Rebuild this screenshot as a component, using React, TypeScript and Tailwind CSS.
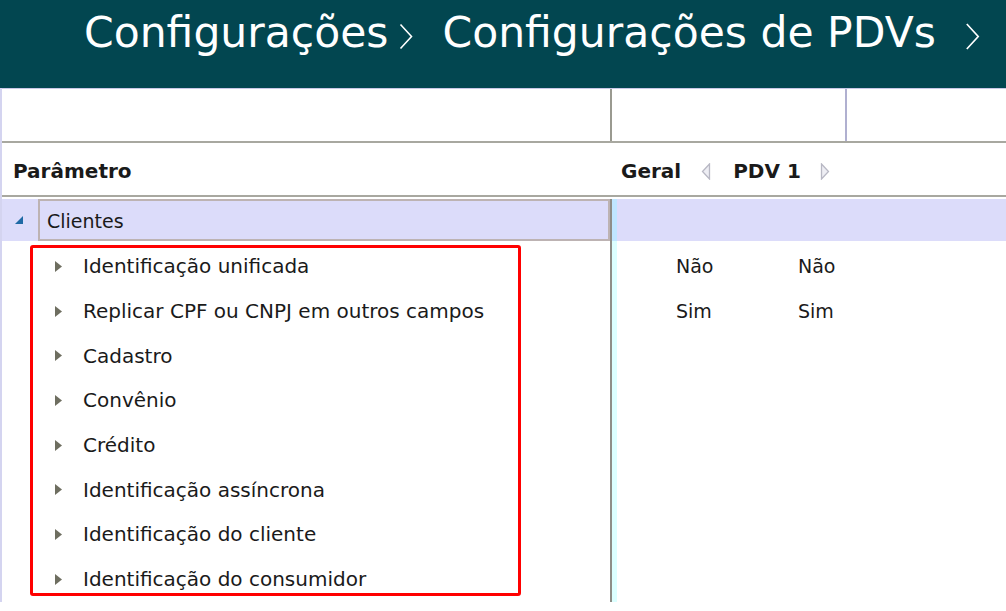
import React from 'react';

const rows = [
  { label: 'Identificação unificada', geral: 'Não', pdv: 'Não' },
  { label: 'Replicar CPF ou CNPJ em outros campos', geral: 'Sim', pdv: 'Sim' },
  { label: 'Cadastro' },
  { label: 'Convênio' },
  { label: 'Crédito' },
  { label: 'Identificação assíncrona' },
  { label: 'Identificação do cliente' },
  { label: 'Identificação do consumidor' },
];

function Chevron({ className }: { className?: string }) {
  return (
    <svg viewBox="0 0 14 26" className={className} fill="none" stroke="currentColor" strokeWidth="1.6">
      <path d="M1.5 1 L12.5 13 L1.5 25" />
    </svg>
  );
}

function ChildArrow() {
  return (
    <svg viewBox="0 0 7 11" className="w-[7px] h-[11px]">
      <path d="M0 0 L7 5.5 L0 11 Z" fill="#6e6e60" />
    </svg>
  );
}

function NavArrow({ dir }: { dir: 'left' | 'right' }) {
  return (
    <svg viewBox="0 0 10 17" className="w-[10px] h-[17px]">
      {dir === 'left' ? (
        <path d="M8.5 1 L1.5 8.5 L8.5 16 Z" fill="#eeeef4" stroke="#b8b8c4" strokeWidth="1.3" />
      ) : (
        <path d="M1.5 1 L8.5 8.5 L1.5 16 Z" fill="#eeeef4" stroke="#b8b8c4" strokeWidth="1.3" />
      )}
    </svg>
  );
}

export default function App() {
  return (
    <div
      className="relative w-[1006px] h-[611px] overflow-hidden bg-white text-[#1a1a1a]"
      style={{ fontFamily: '"DejaVu Sans", Verdana, sans-serif' }}
    >
      {/* Title bar */}
      <div className="h-[88px] bg-[#024650] flex items-start pt-[7px] pl-[84px] text-white text-[42.5px] leading-[52px] whitespace-nowrap">
        <span>Configurações</span>
        <Chevron className="w-[14px] h-[27px] mt-[16px] ml-[11px] mr-[29px]" />
        <span>Configurações de PDVs</span>
        <Chevron className="w-[15px] h-[27px] mt-[16px] ml-[29px]" />
      </div>

      <div className="border-l-2 border-[#d4d4f0]">
        {/* empty filter row */}
        <div className="h-[55px] flex border-t border-[#c8c8e6] border-b-2 border-b-[#a8a8a0]">
          <div className="w-[610px] border-r-2 border-[#9a9a90]" />
          <div className="w-[235px] border-r-2 border-[#b0b0d0]" />
          <div className="flex-1" />
        </div>

        {/* column headers */}
        <div className="h-[54px] flex items-center pt-[4px] border-b-2 border-[#a8a8a0] font-bold text-[20px]">
          <div className="w-[610px] pl-[11px]">Parâmetro</div>
          <div className="flex items-center pl-[9px]">
            <span>Geral</span>
            <span className="ml-[20px]"><NavArrow dir="left" /></span>
            <span className="ml-[22px]">PDV 1</span>
            <span className="ml-[19px]"><NavArrow dir="right" /></span>
          </div>
        </div>

        {/* group row */}
        <div className="h-[44px] flex bg-[#dcdcfa] border-t-2 border-white">
          <div className="w-[36px] flex items-center justify-center">
            <svg viewBox="0 0 8 8" className="w-[8px] h-[8px] ml-[-2px]">
              <path d="M8 0 L8 8 L0 8 Z" fill="#1f6aa5" />
            </svg>
          </div>
          <div className="w-[572px] border-2 border-[#bdb3b3] flex items-center pl-[7px] pt-[2px] text-[19px]">Clientes</div>
          <div className="w-[2px] bg-[#8e8e88]" />
          <div className="w-[5px] bg-[#bfe6ff]" />
          <div className="flex-1" />
        </div>

        {/* child rows */}
        <div className="flex">
          <div className="w-[610px] border-r-2 border-[#8e8e88] pt-[3px]">
            {rows.map((r) => (
              <div key={r.label} className="h-[44.7px] flex items-center text-[20px]">
                <div className="w-[81px] flex justify-end pr-[21px]">
                  <ChildArrow />
                </div>
                <span>{r.label}</span>
              </div>
            ))}
          </div>
          <div className="w-[5px] bg-[#dcffff]" />
          <div className="flex-1 pt-[3px]">
            {rows.map((r) => (
              <div key={r.label} className="h-[44.7px] flex items-center text-[19px]">
                <div className="w-[181px] shrink-0 pl-[59px]">{r.geral}</div>
                <div>{r.pdv}</div>
              </div>
            ))}
          </div>
        </div>
      </div>

      {/* highlight annotation */}
      <div className="absolute left-[30px] top-[245px] w-[491px] h-[351px] border-[3px] border-[#ff0000] rounded-[3px] pointer-events-none" />
    </div>
  );
}
